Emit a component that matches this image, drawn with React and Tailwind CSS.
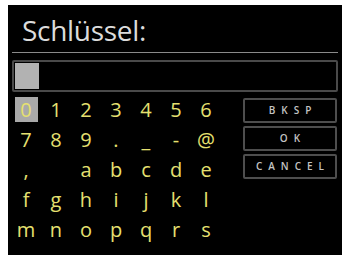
const rows = [
  ['0', '1', '2', '3', '4', '5', '6'],
  ['7', '8', '9', '.', '_', '-', '@'],
  [',', ' ', 'a', 'b', 'c', 'd', 'e'],
  ['f', 'g', 'h', 'i', 'j', 'k', 'l'],
  ['m', 'n', 'o', 'p', 'q', 'r', 's'],
];

const buttons = ['BKSP', 'OK', 'CANCEL'];

export default function App() {
  return (
    <div className="w-[343px] h-[257px] bg-white pt-[5px] pl-[8px] overflow-hidden" style={{ fontFamily: '"Open Sans", "Noto Sans", sans-serif' }}>
      <div className="w-[334px] h-[250px] bg-black flex flex-col">
        <div className="h-[47px] pt-[11px] pl-[14px] text-[28px] leading-[29px] tracking-[-0.3px] text-[#dcdcdc]">
          Schlüssel:
        </div>
        <div className="mx-[4px] h-px bg-[#8a8a8a]" />
        <div className="mx-[4px] mt-[7px] h-[32px] border-2 border-[#4a4a4a] rounded-[2px] p-[1px]">
          <div className="w-[24px] h-full bg-[#b2b2b2]" />
        </div>
        <div className="flex mt-[5px]">
          <div className="ml-[3px] grid grid-cols-[repeat(7,30px)] auto-rows-[30px]">
            {rows.flat().map((ch, i) => (
              <div key={i} className="flex justify-center">
                <div
                  className={`w-[23px] h-[25px] flex items-center justify-center text-[20px] font-medium leading-none text-[#e6e070] ${
                    i === 0 ? 'bg-[#a9a9a9]' : ''
                  }`}
                >
                  {ch}
                </div>
              </div>
            ))}
          </div>
          <div className="ml-auto mr-[5px] mt-[1px] w-[94px] flex flex-col gap-[3px]">
            {buttons.map((b) => (
              <div
                key={b}
                className="h-[25px] border-2 border-[#4e4e4e] rounded-[2px] flex items-center justify-center text-[10px] font-semibold tracking-[6px] pl-[6px] text-[#c4c4c4]"
              >
                {b}
              </div>
            ))}
          </div>
        </div>
      </div>
    </div>
  );
}
